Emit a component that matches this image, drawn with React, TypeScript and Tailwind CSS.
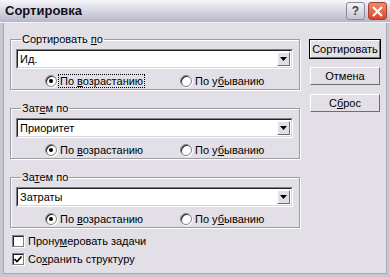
import React from "react";

function U({ children }: { children: React.ReactNode }) {
  return <span className="underline underline-offset-1">{children}</span>;
}

function Combo({ value }: { value: string }) {
  return (
    <div className="h-[20px] flex bg-white border-t border-l border-[#7f7f86] border-r border-b border-r-white border-b-white">
      <div className="flex-1 flex items-center pl-[2px] border-t border-l border-[#222] border-r border-b border-r-[#d8d6dc] border-b-[#d8d6dc]">
        {value}
        <div className="ml-auto mr-[1px] w-[13px] h-[14px] bg-[#e2e0e6] flex items-center justify-center border-t border-l border-white border-r border-b border-r-[#6e6d74] border-b-[#6e6d74]">
          <svg width="7" height="4" viewBox="0 0 7 4">
            <path d="M0 0h7L3.5 4z" fill="#000" />
          </svg>
        </div>
      </div>
    </div>
  );
}

function Radio({ checked }: { checked?: boolean }) {
  return (
    <span className="relative w-[12px] h-[12px] rounded-full bg-white border border-[#7f7f86] shadow-[inset_1px_1px_0_#222,1px_1px_0_#fff] flex items-center justify-center shrink-0">
      {checked && <span className="w-[4px] h-[4px] rounded-full bg-black" />}
    </span>
  );
}

function Group({
  legend,
  value,
  focus,
}: {
  legend: React.ReactNode;
  value: string;
  focus?: boolean;
}) {
  return (
    <fieldset className="h-[57px] border border-[#9d9ca3] shadow-[inset_1px_1px_0_#fff,1px_1px_0_#fff] pl-[5px] pr-[6px] min-w-0">
      <legend className="ml-[5px] px-[1px] leading-[12px]">{legend}</legend>
      <div className="mt-[4px]">
        <Combo value={value} />
      </div>
      <div className="flex items-center mt-[6px] h-[12px]">
        <div className="w-[164px] pl-[29px] flex items-center gap-[2px]">
          <Radio checked />
          <span className={focus ? "outline outline-1 outline-dotted outline-black px-[1px] leading-[12px]" : "px-[1px] leading-[12px]"}>
            По <U>в</U>озрастанию
          </span>
        </div>
        <div className="flex items-center gap-[2px]">
          <Radio />
          <span className="px-[1px] leading-[12px]">
            По у<U>б</U>ыванию
          </span>
        </div>
      </div>
    </fieldset>
  );
}

function Btn({ children, def }: { children: React.ReactNode; def?: boolean }) {
  return (
    <div className={def ? "border border-black" : "border border-transparent"}>
      <div className="h-[18px] flex items-center justify-center bg-[#e2e0e6] border-t border-l border-white border-r border-b border-r-[#6e6d74] border-b-[#6e6d74]">
        {children}
      </div>
    </div>
  );
}

function Check({ checked, children }: { checked?: boolean; children: React.ReactNode }) {
  return (
    <div className="h-[18px] flex items-center gap-[4px]">
      <span className="w-[12px] h-[12px] bg-white border border-[#7f7f86] shadow-[inset_1px_1px_0_#222,1px_1px_0_#fff] flex items-center justify-center">
        {checked && (
          <svg width="8" height="7" viewBox="0 0 8 7">
            <path d="M0.5 3 L3 5.5 L7.5 0.5" stroke="#000" strokeWidth="1.6" fill="none" />
          </svg>
        )}
      </span>
      <span>{children}</span>
    </div>
  );
}

export default function App() {
  return (
    <div className="w-[390px] h-[277px] flex flex-col bg-[#e2e0e6] text-[11px] text-black font-['Liberation_Sans',Arial,sans-serif] overflow-hidden">
      {/* Title bar */}
      <div className="h-[23px] shrink-0 flex items-center pl-[5px] pr-[3px] bg-gradient-to-b from-[#f6f6fa] via-[#d6d6e2] to-[#b6b6ca] border-b border-[#f2f2f6]">
        <span className="font-bold text-[13px] text-[#101018]">Сортировка</span>
        <div className="ml-auto flex gap-[3px]">
          <div className="w-[19px] h-[18px] rounded-[3px] border border-[#8a8a9c] bg-gradient-to-b from-[#f4f4f8] to-[#c4c4d2] flex items-center justify-center text-[12px] font-bold text-[#404050]">
            ?
          </div>
          <div className="w-[19px] h-[18px] rounded-[3px] border border-[#a04030] bg-gradient-to-b from-[#f08a70] to-[#d8482a] flex items-center justify-center">
            <svg width="11" height="11" viewBox="0 0 11 11">
              <path d="M1 1 L10 10 M10 1 L1 10" stroke="#fff" strokeWidth="2" />
            </svg>
          </div>
        </div>
      </div>

      {/* Body */}
      <div className="flex-1 flex border-l-[3px] border-r-[3px] border-b-[3px] border-[#c8c7d2] shadow-[inset_1px_0_0_#a9a8b4,inset_-1px_0_0_#a9a8b4,inset_0_-1px_0_#a9a8b4]">
        <div className="w-[297px] pl-[7px] pt-[10px] flex flex-col">
          <div className="flex flex-col gap-[12px]">
            <Group legend={<>Сортировать <U>п</U>о</>} value="Ид." focus />
            <Group legend={<>Зат<U>е</U>м по</>} value="Приоритет" />
            <Group legend={<>За<U>т</U>ем по</>} value="Затраты" />
          </div>
          <div className="mt-[4px] pl-[2px]">
            <Check>Прону<U>м</U>еровать задачи</Check>
            <Check checked>Со<U>х</U>ранить структуру</Check>
          </div>
        </div>
        <div className="w-[72px] ml-[9px] pt-[16px] flex flex-col gap-[7px]">
          <Btn def>Сортировать</Btn>
          <Btn>Отмена</Btn>
          <Btn>С<U>б</U>рос</Btn>
        </div>
      </div>
    </div>
  );
}
